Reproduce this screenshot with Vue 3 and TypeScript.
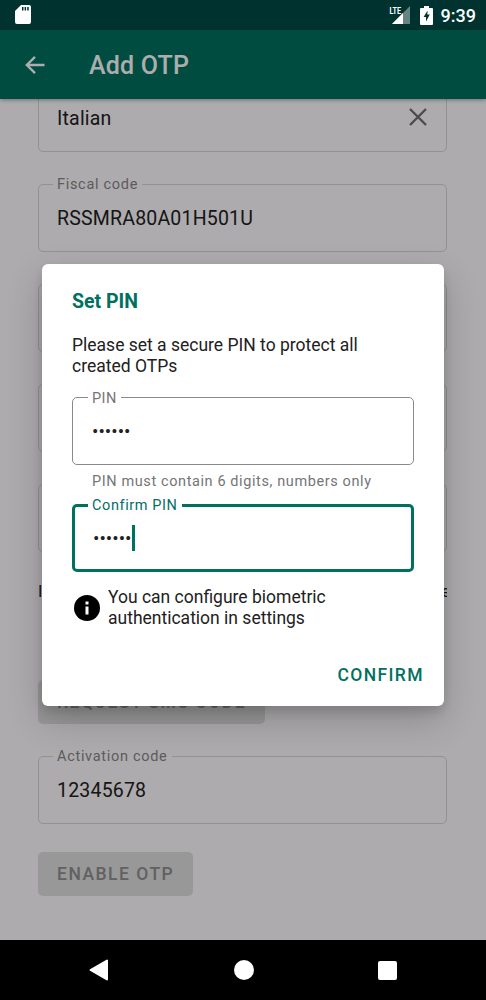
<script setup lang="ts">
type Field = { label: string; value: string };

const topFields: Field[] = [
  { label: "Nationality", value: "Italian" },
  { label: "Fiscal code", value: "RSSMRA80A01H501U" },
  { label: "Birth date", value: "01/01/1980" },
  { label: "Birth place", value: "Roma" },
  { label: "Phone number", value: "3331234567" },
];
</script>

<template>
  <div class="screen">
    <div class="status">
      <svg class="sd" width="16" height="19" viewBox="0 0 16 19">
        <path d="M6 0H14a2 2 0 0 1 2 2V17a2 2 0 0 1-2 2H2a2 2 0 0 1-2-2V6Z" fill="#fff" />
        <path d="M7 2h1.500v3.500H7zM9.600 2h1.500v3.500H9.600zM12.200 2h1.500v3.500h-1.500z" fill="#00332f" />
      </svg>
      <div class="status-right">
        <span class="lte">LTE</span>
        <svg class="signal" width="18" height="18" viewBox="0 0 18 18">
          <path d="M0 18 18 0V18Z" fill="#fff" fill-opacity="0.4" />
          <path d="M0 18 11 7V18Z" fill="#fff" />
        </svg>
        <svg class="battery" width="13" height="19" viewBox="0 0 13 19">
          <path d="M4 0H9V2H12a1 1 0 0 1 1 1V18a1 1 0 0 1-1 1H1a1 1 0 0 1-1-1V3a1 1 0 0 1 1-1H4Z" fill="#fff" />
          <path d="M7.600 4.500 3.600 11H6V15.500L9.800 8.600H7.300Z" fill="#00332f" />
        </svg>
        <span class="time">9:39</span>
      </div>
    </div>

    <div class="appbar">
      <svg width="24" height="24" viewBox="0 0 24 24">
        <path d="M21.500 12H4M12 3.800 3.800 12l8.200 8.200" fill="none" stroke="#fff" stroke-width="2.400" />
      </svg>
      <span class="appbar-title">Add OTP</span>
    </div>

    <div class="content">
      <div class="form">
        <div v-for="field in topFields" :key="field.label" class="field">
          <label>{{ field.label }}</label>
          <span class="value">{{ field.value }}</span>
          <svg v-if="field.value === 'Italian'" class="clear" width="20" height="20" viewBox="0 0 20 20">
            <path d="M2 2 18 18M18 2 2 18" fill="none" stroke="#707070" stroke-width="2.400" />
          </svg>
        </div>
        <p class="notice">I will receive the activation code on this phone number, please make sure</p>
        <button class="btn sms">REQUEST SMS CODE</button>
        <div class="field">
          <label>Activation code</label>
          <span class="value">12345678</span>
        </div>
        <button class="btn enable">ENABLE OTP</button>
      </div>
    </div>

    <div class="nav">
      <svg width="20" height="22" viewBox="0 0 20 22">
        <path d="M18 1.500V20.500L1.500 11Z" fill="#fff" stroke="#fff" stroke-width="2" stroke-linejoin="round" />
      </svg>
      <span class="home"></span>
      <span class="recent"></span>
    </div>

    <div class="scrim"></div>

    <div class="dialog">
      <h2>Set PIN</h2>
      <p class="intro">Please set a secure PIN to protect all created OTPs</p>
      <div class="pin">
        <label>PIN</label>
        <span class="dots">••••••</span>
      </div>
      <p class="helper">PIN must contain 6 digits, numbers only</p>
      <div class="pin focused">
        <label>Confirm PIN</label>
        <span class="dots">••••••</span><span class="caret"></span>
      </div>
      <div class="info">
        <svg width="26" height="26" viewBox="0 0 26 26">
          <circle cx="13" cy="13" r="13" fill="#000" />
          <rect x="11.500" y="11.500" width="3" height="8" fill="#fff" />
          <rect x="11.500" y="6.500" width="3" height="3" fill="#fff" />
        </svg>
        <span>You can configure biometric authentication in settings</span>
      </div>
      <button class="confirm">CONFIRM</button>
    </div>
  </div>
</template>

<style>
body {
  background: #000;
}
</style>

<style scoped>
.screen {
  position: relative;
  width: 486px;
  height: 1000px;
  display: flex;
  flex-direction: column;
  overflow: hidden;
  font-family: Roboto, "Liberation Sans", sans-serif;
  color: #212121;
}

.status {
  height: 30px;
  flex: none;
  background: #00332f;
  display: flex;
  align-items: center;
  justify-content: space-between;
  padding: 0 10px 0 15px;
}
.status-right {
  display: flex;
  align-items: center;
  height: 100%;
}
.sd {
  margin-top: -1px;
}
.lte {
  font-size: 9px;
  font-weight: 700;
  color: #fff;
  transform: scaleX(0.8);
  width: 14px;
  margin: -9px -10px 0 0;
}
.signal {
  margin-right: 10px;
}
.battery {
  margin-right: -1px;
}
.time {
  font-size: 18px;
  font-weight: 500;
  color: #fff;
  margin-left: 9px;
}

.appbar {
  height: 69px;
  flex: none;
  position: relative;
  z-index: 1;
  background: #00705f;
  display: flex;
  align-items: center;
  gap: 42px;
  padding-left: 23px;
  box-shadow: 0 1px 4px rgba(0, 0, 0, 0.35);
}
.appbar-title {
  color: #fff;
  font-size: 25px;
  font-weight: 500;
  letter-spacing: 0.2px;
  margin-top: 2px;
}

.content {
  flex: 1;
  overflow: hidden;
  background: #fffdff;
}
.form {
  margin-top: -15px;
  padding: 0 39px 0 38px;
  display: flex;
  flex-direction: column;
  gap: 32px;
}
.field {
  padding: 0 18px;
  height: 68px;
  box-sizing: border-box;
  border: 1px solid #d8d8d8;
  border-radius: 5px;
  display: flex;
  align-items: center;
  position: relative;
}
.field label,
.pin label {
  position: absolute;
  left: 14px;
  top: -9px;
  padding: 0 4px;
  line-height: 18px;
  background: #fffdff;
  font-size: 14.500px;
  letter-spacing: 0.7px;
  color: #888;
}
.value {
  font-size: 19.500px;
  letter-spacing: 0.2px;
}
.clear {
  position: absolute;
  right: 18px;
  top: 22px;
}
.notice {
  margin: -2px 0 0;
  font-size: 16px;
  line-height: 20px;
  height: 20px;
  text-align: justify;
  text-align-last: justify;
  white-space: nowrap;
  overflow: hidden;
}
.btn {
  border: 0;
  border-radius: 5px;
  background: #e0e0e0;
  color: #8f8f8f;
  font-family: inherit;
  font-size: 17.500px;
  font-weight: 500;
  letter-spacing: 1.500px;
  height: 44px;
  align-self: flex-start;
  padding: 0 19px;
}
.sms {
  margin-top: 46px;
}
.enable {
  margin-top: -4px;
}

.nav {
  height: 60px;
  flex: none;
  background: #000;
  position: relative;
  z-index: 3;
  display: flex;
  align-items: center;
  padding: 0 89px 0 89px;
  justify-content: space-between;
}
.home {
  width: 20px;
  height: 20px;
  border-radius: 50%;
  background: #fff;
}
.recent {
  width: 19px;
  height: 19px;
  border-radius: 2px;
  background: #fff;
}

.scrim {
  position: absolute;
  inset: 30px 0 60px;
  background: rgba(0, 0, 0, 0.32);
  z-index: 2;
}

.dialog {
  position: absolute;
  left: 42px;
  top: 264px;
  width: 402px;
  height: 442px;
  box-sizing: border-box;
  z-index: 3;
  background: #fff;
  border-radius: 6px;
  padding: 27px 30px 0;
  display: flex;
  flex-direction: column;
  box-shadow: 0 14px 36px rgba(0, 0, 0, 0.2), 0 6px 10px rgba(0, 0, 0, 0.12);
}
h2 {
  margin: 0;
  font-size: 19.500px;
  line-height: 22px;
  font-weight: 700;
  color: #00705f;
}
.intro {
  margin: 22px 0 0;
  font-size: 17.500px;
  line-height: 21px;
}
.pin {
  position: relative;
  margin-top: 20px;
  padding: 0 19px;
  height: 68px;
  box-sizing: border-box;
  border: 1.500px solid #8a8a8a;
  border-radius: 5px;
  display: flex;
  align-items: center;
}
.pin label {
  left: 15px;
  top: -8px;
  letter-spacing: 0.4px;
  color: #757575;
}
.dots {
  font-size: 19px;
  color: #212121;
}
.helper {
  margin: 8px 0 0 20px;
  font-size: 14.500px;
  line-height: 18px;
  letter-spacing: 0.6px;
  color: #757575;
}
.focused {
  margin-top: 13px;
  border: 3px solid #00705f;
  padding: 0 18px;
}
.focused label {
  left: 13px;
  top: -10px;
  letter-spacing: 0.6px;
  color: #00705f;
}
.caret {
  width: 3px;
  height: 26px;
  background: #00705f;
  margin-left: 1px;
}
.info {
  margin-top: 15px;
  display: flex;
  align-items: center;
  font-size: 17.500px;
  line-height: 21px;
  gap: 8px;
  padding-left: 2px;
}
.info svg {
  flex: none;
}
.info span {
  padding-right: 40px;
}
.confirm {
  margin: auto -10px 21px 0;
  align-self: flex-end;
  border: 0;
  padding: 0;
  background: none;
  font-family: inherit;
  font-size: 17.500px;
  font-weight: 500;
  letter-spacing: 1.400px;
  color: #00705f;
}
</style>
